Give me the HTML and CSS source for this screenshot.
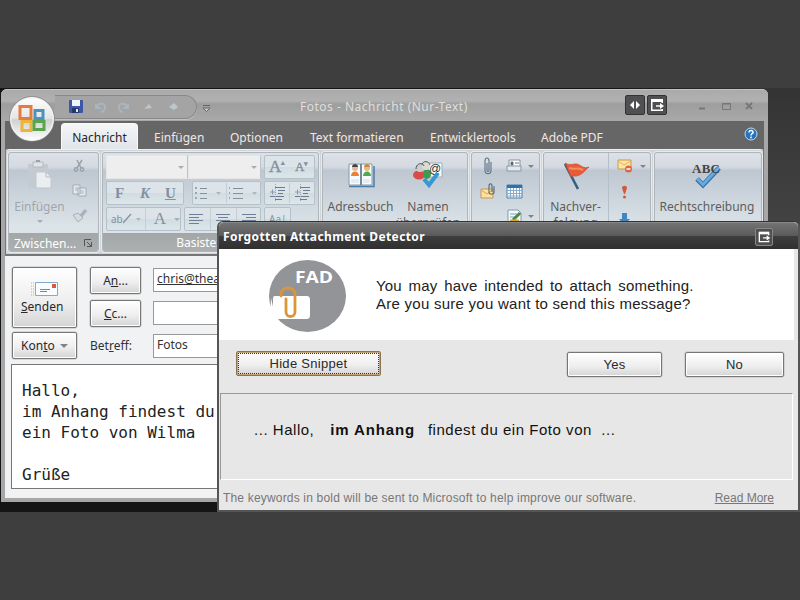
FILE: index.html
```
<!DOCTYPE html>
<html lang="de">
<head>
    <meta charset="utf-8">
    <title>Fotos - Nachricht (Nur-Text)</title>
    <link rel="stylesheet" href="styles.css">
</head>
<body>
<div class="desktop">
    <div class="mail">
        <div class="titlebar">
            <div class="quick">
                <svg width="140" height="22" viewBox="0 0 140 22">
                    <rect x="14" y="4" width="14" height="13" rx="1" fill="#3d56a5"/><rect x="17" y="4" width="8" height="6" fill="#eef3fb"/><path d="M17 12h7v5h-7z" fill="#25366e"/><path d="M21 13h2v3h-2z" fill="#dfe7f2"/>
                    <g fill="none" stroke="#a8b4bf" stroke-width="2"><path d="M41 8v4h5M42 11c2-5 9-4 8 1 0 2-2 4-4 4M73 8v4h-5M72 11c-2-5-9-4-8 1 0 2 2 4 4 4"/></g>
                    <path d="M89 13l5-5 3 4zM114 11l5-4 4 4-4 3z" fill="#bcc6cd"/>
                </svg>
            </div>
            <svg class="customize" width="9" height="9" viewBox="0 0 9 9"><path d="M1 1.500h7M1 4h7L4.500 7.500z" stroke="#666" fill="#ccc"/></svg>
            <div class="caption">Fotos - Nachricht (Nur-Text)</div>
            <div class="tools">
                <span class="tool"><svg width="18" height="18" viewBox="0 0 18 18"><path d="M8 5v8L4 9zM10 5v8l4-4z" fill="#fff"/></svg></span>
                <span class="tool"><svg width="18" height="18" viewBox="0 0 18 18"><path d="M3 3h12v3H3z" fill="#fff"/><path d="M14.250 5v2M3.750 5v9.250h10.500V13" fill="none" stroke="#fff" stroke-width="1.500"/><path d="M8 9.200h4V7l4 3-4 3v-2.200H8z" fill="#fff"/></svg></span>
            </div>
            <svg class="winbtns" width="56" height="12" viewBox="0 0 56 12"><path d="M1 8.500h6" stroke="#777" stroke-width="2"/><path d="M24.500 3.500h8v6h-8zM24 4h9" fill="none" stroke="#777"/><path d="M48 3l6 6M54 3l-6 6" stroke="#777" stroke-width="1.800"/></svg>
        </div>
        <div class="tabs">
            <span class="tab active">Nachricht</span>
            <span class="tab t2">Einfügen</span>
            <span class="tab t3">Optionen</span>
            <span class="tab t4">Text formatieren</span>
            <span class="tab t5">Entwicklertools</span>
            <span class="tab t6">Adobe PDF</span>
            <svg class="help" width="14" height="14" viewBox="0 0 14 14"><circle cx="7" cy="7" r="6" fill="#2874bc" stroke="#b8dcf5"/><path d="M5 5.500c0-3 4.500-2.500 4 0C8.700 7 7 6.500 7 8.500M7 9.500v1.700" fill="none" stroke="#fff" stroke-width="1.500"/></svg>
        </div>
        <div class="ribbon">
            <div class="group clipboard">
                <div class="area">
                    <div class="big">
                        <svg width="30" height="32" viewBox="0 0 30 32"><path d="M3 4h20v24H3z" fill="#c3cad2"/><path d="M8 2h10v5H8z" fill="#e0e4e8" stroke="#b2b9c0"/><path d="M11 1h4" stroke="#9aa3ac" stroke-width="2"/><path d="M11 12h10l5 5v11H11z" fill="#ebeef1" stroke="#c0c7cd"/><path d="M21 12v5h5" fill="none" stroke="#b4bdc5"/></svg>
                        <span>Einfügen</span>
                        <i class="drop"></i>
                    </div>
                    <div class="small-col">
                        <svg width="18" height="18" viewBox="0 0 18 18"><path d="M7 3l4 8M12 3l-5 8" stroke="#98a2ac" stroke-width="1.500"/><circle cx="6" cy="12.500" r="1.700" fill="none" stroke="#98a2ac" stroke-width="1.500"/><circle cx="12" cy="12.500" r="1.700" fill="none" stroke="#98a2ac" stroke-width="1.500"/></svg>
                        <svg width="18" height="18" viewBox="0 0 18 18"><path d="M3 3h7v9H3zM8 6h8v8H8z" fill="#e6eaee" stroke="#a2abb4"/><path d="M5 6h3M5 8h3M10 9h4M10 11h4" stroke="#abb3bb"/></svg>
                        <svg width="18" height="18" viewBox="0 0 18 18"><path d="M16 3l-5 6" stroke="#a9b1ba" stroke-width="3.500"/><path d="M3 8l5-2 5 5-5 4z" fill="#d5dadf" stroke="#a9b1ba"/></svg>
                    </div>
                </div>
                <div class="label clip-label"><span>Zwischen...</span><svg width="9" height="9" viewBox="0 0 9 9"><path d="M.5 7V.5H7M3 3l4 4M7.500 3v4.500H3" fill="none" stroke="#555"/></svg></div>
            </div>
            <div class="group format">
                <div class="area rows">
                    <div class="row">
                        <div class="combo c1"><i class="drop"></i></div><div class="combo c2"><i class="drop"></i></div>
                        <div class="box b51 serif"><b class="fa">A<sup>▴</sup></b><b class="fb">A<sup>▾</sup></b></div>
                    </div>
                    <div class="row">
                        <div class="box b78 serif"><b>F</b><b><em>K</em></b><b><u>U</u></b></div>
                        <div class="box b70 gap8"><svg width="68" height="22" viewBox="0 0 68 22"><path d="M2 6h2M2 11h2M2 16h2M36 6h1M36 11h1M36 16h1" stroke="#9aa6b2" stroke-width="2"/><path d="M7 6.500h7M7 11.500h7M7 16.500h7M40 6.500h10M40 11.500h10M40 16.500h10" stroke="#8290a0"/><path d="M23 10h5l-2.500 3zM59 10h5l-2.500 3z" fill="#b0b8bf"/><path d="M33.500 1v20" stroke="#c5ced5"/></svg></div>
                        <div class="box b51"><svg width="49" height="22" viewBox="0 0 49 22"><path d="M10 5.500h10M13 8.500h7M13 11.500h5M5 14.500h14M10 17.500h7M35 5.500h10M38 8.500h7M38 11.500h5M30 14.500h14M35 17.500h7" stroke="#687b91"/><path d="M5 10h5M7.500 7.500v5M30 10h5M32.500 7.500v5" stroke="#8c9bab"/><path d="M10.500 2v18M35.500 2v18" stroke="#9daab6" stroke-dasharray="1 1"/><path d="M24.500 1v20" stroke="#c5ced5"/></svg></div>
                    </div>
                    <div class="row">
                        <div class="box b74"><span class="ab">ab</span><svg width="24" height="22" viewBox="0 0 24 22"><path d="M0 15l8-9" stroke="#8a98a6" stroke-width="1.500"/><path d="M13 10h5l-2.500 3z" fill="#b0b8bf"/><path d="M22.500 0v22" stroke="#c5ced5"/></svg><span class="serif big-a">A</span><i class="drop"></i></div>
                        <div class="box b78b"><svg width="76" height="22" viewBox="0 0 76 22"><path d="M4 6.500h14M4 9.500h10M4 12.500h14M4 15.500h10M31 6.500h14M33 9.500h10M31 12.500h14M33 15.500h10M57 6.500h14M61 9.500h10M57 12.500h14" stroke="#6e8198"/><path d="M25.500 0v22M51.500 0v22" stroke="#c5ced5"/></svg></div>
                        <div class="box b26"><span class="ab">Aa|</span></div>
                    </div>
                </div>
                <div class="label basic">Basistext</div>
            </div>
            <div class="group names">
                <div class="area pair">
                    <div class="big">
                        <svg width="30" height="32" viewBox="0 0 30 32"><path d="M3 4h12v21H3zM15 4h11v21H15z" fill="#f8fbfd" stroke="#8299ad"/><path d="M3 26.500h25V6" fill="none" stroke="#4b7da8" stroke-width="1.500"/><path d="M15 4v21" stroke="#667f95" stroke-width="1.500"/><path d="M5 16c0-6 8-6 8 0z" fill="#eb8134"/><path d="M17 16c0-6 8-6 8 0z" fill="#4faa50"/><circle cx="9" cy="8" r="3" fill="#e3b99a"/><circle cx="21" cy="8" r="3" fill="#e4bc8a"/><path d="M6 7c0-4 6-4 6 0z" fill="#434343"/><path d="M18 7c0-4 6-4 6 0z" fill="#c58c39"/><path d="M5 20h8M5 22h8M17 20h7M17 22h7" stroke="#d5dee5"/></svg>
                        <span>Adressbuch</span>
                    </div>
                    <div class="big second">
                        <svg width="32" height="32" viewBox="0 0 32 32"><path d="M12 3h18v14H12z" fill="#f8fbfe" stroke="#98aebf"/><ellipse cx="7" cy="15" rx="6" ry="4.500" fill="#d94b48"/><ellipse cx="15" cy="14" rx="4" ry="5" fill="#3b9b4e"/><circle cx="8" cy="8" r="4" fill="#cbcdd0"/><circle cx="14" cy="6" r="4" fill="#dbdad5"/><path d="M4 9c0-6 7-7 8-3M10 5c1-5 7-4 8 0" fill="none" stroke="#555"/><text x="17" y="13" font-family="Liberation Sans" font-size="12" fill="#333">@</text><path d="M12 19l5 6 9-12" fill="none" stroke="#3897d5" stroke-width="4"/></svg>
                        <span>Namen<br>überprüfen</span>
                    </div>
                </div>
                <div class="label"></div>
            </div>
            <div class="group include">
                <div class="area icons">
                    <div class="small-col">
                        <svg width="18" height="20" viewBox="0 0 18 20"><path d="M12 6v8c0 5-6 5-6 0V5c0-4 4-4 4 0v9c0 2-2 2-2 0V7" fill="none" stroke="#5c7185" stroke-width="1.100"/></svg>
                        <svg width="18" height="20" viewBox="0 0 18 20"><path d="M2 8h12v9H2z" fill="#ffe09b" stroke="#c39b54"/><path d="M2 9l6 4 6-4" fill="none" stroke="#d6a75a"/><path d="M15 5v6c0 3-5 3-5 0V5c0-3 3-3 3 0v6" fill="none" stroke="#52697d" stroke-width="1.100"/></svg>
                    </div>
                    <div class="small-col right">
                        <div><svg width="18" height="20" viewBox="0 0 18 20"><path d="M4 4h11v9H4z" fill="#fff" stroke="#8094a7"/><path d="M2 10h14v5H2z" fill="#e1e8ef" stroke="#8797a5"/><path d="M6 6h2v3H6zM10 7h4" fill="#555" stroke="#777"/></svg><i class="drop dark"></i></div>
                        <div><svg width="18" height="20" viewBox="0 0 18 20"><path d="M2 4h15v13H2z" fill="#fff" stroke="#4d7eac"/><path d="M2 5.500h15" stroke="#3270aa" stroke-width="3"/><path d="M5.500 7v10M8.500 7v10M11.500 7v10M14.500 7v10M2 9.500h15M2 12.500h15M2 15h15" stroke="#86abcf"/></svg></div>
                        <div class="down"><svg width="18" height="20" viewBox="0 0 18 20"><path d="M3 4h10l3 3v12H3z" fill="#f6f9fc" stroke="#8299b0"/><path d="M5 8h7M5 11h6" stroke="#7ba1c2"/><path d="M8 14l7-7" stroke="#4d863d" stroke-width="3"/><path d="M5 15h9" stroke="#d8a63f" stroke-width="3"/></svg><i class="drop dark"></i></div>
                    </div>
                </div>
                <div class="label"></div>
            </div>
            <div class="group follow">
                <div class="area">
                    <div class="big">
                        <svg width="32" height="32" viewBox="0 0 32 32"><path d="M5 4l13 25" stroke="#375f80" stroke-width="2.600"/><path d="M5 3c7 4 10-2 16 3 3 2 5 2 8 1-5 4-8 10-16 9l-2 1z" fill="#e75c36" stroke="#b94930" stroke-width=".6"/><path d="M9 8c5 2 8-1 14 2" fill="none" stroke="#f78b62" stroke-width="2"/></svg>
                        <span>Nachver-<br>folgung</span>
                    </div>
                    <div class="small-col flags">
                        <div><svg width="18" height="20" viewBox="0 0 18 20"><path d="M1 4h13v9H1z" fill="#ffe49f" stroke="#c59a4e"/><path d="M1 5l6 4 7-4" fill="none" stroke="#e0b467"/><circle cx="11.500" cy="13" r="3.500" fill="#dd6540"/><path d="M9.500 13h4" stroke="#fff" stroke-width="1.500"/></svg><i class="drop dark"></i></div>
                        <div><svg width="18" height="20" viewBox="0 0 18 20"><path d="M5 6c0-3 5-3 5 0l-2 6H7z" fill="#d75737"/><circle cx="7.500" cy="15" r="1.500" fill="#d75737"/></svg></div>
                        <div class="down"><svg width="18" height="20" viewBox="0 0 18 20"><path d="M5 5h5v6h3l-5.500 6L2 11h3z" fill="#4386bd"/></svg></div>
                    </div>
                </div>
                <div class="label"></div>
            </div>
            <div class="group spell">
                <div class="area">
                    <div class="big">
                        <svg width="36" height="32" viewBox="0 0 36 32"><path d="M8 20l6 6L30 9" fill="none" stroke="#3472ad" stroke-width="5"/><path d="M8 19.500l6 6L30 8.500" fill="none" stroke="#69aada" stroke-width="3"/><text x="3" y="14" font-family="Liberation Serif" font-weight="bold" font-size="13" textLength="28" fill="#444">ABC</text></svg>
                        <span>Rechtschreibung</span>
                    </div>
                </div>
                <div class="label"></div>
            </div>
        </div>
        <div class="compose">
            <div class="header">
                <div class="left-buttons">
                    <button class="btn send"><svg width="28" height="16" viewBox="0 0 28 16"><path d="M5.500 1.500h22v13h-22z" fill="#fafdff" stroke="#87a9c9"/><path d="M22 3h4v4h-4z" fill="#d65b3b"/><path d="M10 8.500h10M10 10.500h7" stroke="#5c8dbb"/><path d="M1 2h3M1 5h3M1 8h3M1 11h3M1 14h3" stroke="#9bb5cd" stroke-dasharray="1 1"/></svg><span><u>S</u>enden</span></button>
                    <button class="btn account">Kon<u>t</u>o <i class="drop dark"></i></button>
                </div>
                <div class="fields">
                    <button class="btn to">A<u>n</u>...</button><div class="field"><u>chris@thea</u></div>
                    <button class="btn to"><u>C</u>c...</button><div class="field"></div>
                    <span class="subject">Bet<u>r</u>eff:</span><div class="field">Fotos</div>
                </div>
            </div>
            <div class="message">Hallo,
im Anhang findest du
ein Foto von Wilma

Grüße</div>
        </div>
        <svg class="orb" width="46" height="46" viewBox="0 0 46 46">
            <defs><linearGradient id="orb" x2="0" y2="1"><stop stop-color="#fff"/><stop offset=".48" stop-color="#e4e5e6"/><stop offset=".52" stop-color="#cfd0d2"/><stop offset="1" stop-color="#fff"/></linearGradient></defs>
            <circle cx="23" cy="23" r="21.500" fill="url(#orb)" stroke="#f5f5f5" stroke-width="1.500"/><circle cx="23" cy="23" r="22.500" fill="none" stroke="#777" stroke-width=".6"/>
            <g fill="none" stroke-width="3"><path d="M11 10.500h11v12H11z" stroke="#e47c3c"/><path d="M26 14.500h8v8h-8z" stroke="#4d91bf"/><path d="M13 25.500h9v9h-9z" stroke="#edb536"/><path d="M25 25.500h10v8H25z" stroke="#5aa54c"/></g>
        </svg>
    </div>

    <div class="dialog">
        <div class="dialog-title"><span>Forgotten Attachment Detector</span><span class="tool"><svg width="16" height="16" viewBox="0 0 18 18"><path d="M3 3h12v3H3z" fill="#fff"/><path d="M14.250 5v2M3.750 5v9.250h10.500V13" fill="none" stroke="#fff" stroke-width="1.500"/><path d="M8 9.200h4V7l4 3-4 3v-2.200H8z" fill="#fff"/></svg></span></div>
        <div class="question">
            <svg width="80" height="74" viewBox="0 0 80 74"><ellipse cx="40.500" cy="37" rx="38.500" ry="36" fill="#939498"/><path d="M6 40c0-3 1-3 3-3h30c3 0 4 1 4 4v15c0 3-1 4-4 4H11c-3 0-3-2-5-6z" fill="#fff"/><path d="M4 39l5 22H3z" fill="#fff"/><path d="M14 37v-2c0-8 14-8 14 0v18c0 6-9 6-9 0V40" fill="none" stroke="#da9638" stroke-width="2.800" stroke-linecap="round"/><text x="28" y="24" font-family="Open Sans" font-weight="bold" font-size="16" textLength="38" lengthAdjust="spacingAndGlyphs" fill="#fff">FAD</text></svg>
            <p><span class="line1">You may have intended to attach something.</span><br><span class="line2">Are you sure you want to send this message?</span></p>
        </div>
        <div class="actions">
            <button class="btn hide">Hide Snippet</button>
            <button class="btn yes">Yes</button>
            <button class="btn no">No</button>
        </div>
        <div class="snippet"><span>... Hallo,</span><b>im Anhang</b><span>findest du ein Foto von&nbsp; ...</span></div>
        <div class="footer"><span>The keywords in bold will be sent to Microsoft to help improve our software.</span><u>Read More</u></div>
    </div>
</div>
</body>
</html>
```
FILE: styles.css
```
* {
    box-sizing: border-box;
}
body {
    margin: 0;
    width: 800px;
    height: 600px;
    overflow: hidden;
    padding-top: 88px;
    background: #3e3e3e;
    font-family: "Noto Sans", sans-serif;
    font-size: 12px;
    color: #333;
}
svg {
    display: block;
    flex: none;
}
.desktop {
    position: relative;
    height: 424px;
    background: linear-gradient(90deg, #151515 0 76%, transparent 96%), linear-gradient(#343434, #444 35%, #303030);
}
.mail {
    position: absolute;
    left: 1px;
    top: 1px;
    width: 767px;
    height: 413px;
    display: flex;
    flex-direction: column;
    border: solid #a7a7a7;
    border-width: 0 4px 4px;
    border-radius: 6px 6px 0 0;
    background: #a7a7a7;
    box-shadow: inset 0 0 0 1px #777;
}
.titlebar {
    height: 32px;
    flex: none;
    display: flex;
    align-items: center;
    margin: 0 -4px;
    padding-left: 54px;
    border-top: 1px solid #c2c2c2;
    border-radius: 6px 6px 0 0;
    background: linear-gradient(#aaa, #b1b1b1 35%, #9e9e9e 45%, #a9a9a9);
}
.quick {
    width: 142px;
    height: 24px;
    margin-top: 3px;
    border: 1px solid #888;
    border-left: 0;
    border-radius: 0 12px 12px 0;
    box-shadow: 0 1px #c0c0c0;
    background: #a4a4a4;
}
.customize {
    margin: 5px 89px 0 5px;
}
.caption {
    width: 325px;
    color: #dedede;
    font-size: 12px;
    letter-spacing: .5px;
    padding-top: 2px;
}
.tools {
    display: flex;
    gap: 2px;
    margin-bottom: 2px;
}
.tool {
    display: flex;
    align-items: center;
    justify-content: center;
    width: 20px;
    height: 20px;
    border: 1px solid #333;
    border-radius: 2px;
    background: #505053;
}
.winbtns {
    margin: 1px 0 0 31px;
}
.tabs {
    height: 28px;
    flex: none;
    display: flex;
    align-items: center;
    padding: 2px 0 0 56px;
    background: #666;
    color: #f0e6e8;
}
.tab {
    width: 83px;
    padding-top: 2px;
    white-space: nowrap;
}
.tab.active {
    width: 77px;
    height: 27px;
    margin-right: 16px;
    padding: 5px 0 0;
    text-align: center;
    border: 1px solid #fafafa;
    border-bottom: 0;
    border-radius: 4px 4px 0 0;
    background: linear-gradient(#f4f6f7, #dfe4e9);
    color: #252525;
}
.tab.t2 { width: 76px; }
.tab.t3 { width: 80px; }
.tab.t4 { width: 120px; }
.tab.t5 { width: 111px; }
.tab.t6 { width: 203px; }
.help {
    margin-top: -4px;
}
.ribbon {
    height: 107px;
    flex: none;
    display: flex;
    gap: 3px;
    margin: 0 1px;
    padding: 2px;
    border-radius: 4px 4px 0 0;
    border-top: 1px solid #eef1f3;
    background: #cfd4d9;
    border-bottom: 2px solid #777;
    color: #5d5d5d;
}
.group {
    flex: none;
    overflow: hidden;
    border: 1px solid #aeb5bb;
    border-radius: 3px;
    box-shadow: 0 0 0 1px #e7ebee;
    background: linear-gradient(#dce1e7, #d5dae2 14%, #bec7d1 18%, #dce4e9 75%);
}
.clipboard { width: 91px; }
.format { width: 217px; }
.names { width: 146px; }
.include { width: 69px; }
.follow { width: 108px; }
.spell { width: 108px; }
.area {
    height: 80px;
    display: flex;
}
.label {
    height: 20px;
    padding-top: 1px;
    text-align: center;
    color: #fff;
    background: linear-gradient(#a3a7a8, #adb1b2);
}
.basic {
    padding-right: 18px;
}
.clip-label {
    display: flex;
    align-items: center;
    justify-content: space-between;
    padding: 0 5px;
}
.big {
    display: flex;
    flex-direction: column;
    align-items: center;
    text-align: center;
    padding-top: 7px;
    line-height: 16px;
    white-space: nowrap;
}
.big svg {
    margin-bottom: 7px;
}
.clipboard .big {
    width: 61px;
    color: #a1a6ab;
}
.clipboard .big .drop {
    margin: 5px 0 0;
}
.clipboard .small-col {
    gap: 7px;
}
.drop {
    display: inline-block;
    width: 0;
    height: 0;
    border: 3px solid transparent;
    border-top-color: #a6aeb5;
    border-bottom: 0;
}
.drop.dark {
    border-top-color: #7c858d;
}
.small-col {
    display: flex;
    flex-direction: column;
    padding-top: 4px;
}
.rows {
    flex-direction: column;
    gap: 2px;
    padding: 2px 3px;
}
.row {
    display: flex;
    height: 24px;
    gap: 3px;
}
.box {
    display: flex;
    align-items: center;
    border: 1px solid #b5c1c8;
    border-radius: 2px;
    background: linear-gradient(#dce4e9 50%, #d1dce2 50%, #dce6ea);
    color: #8490a0;
    overflow: hidden;
}
.combo {
    display: flex;
    align-items: center;
    justify-content: flex-end;
    padding-right: 3px;
    background: #eee;
    border: 1px solid #e6e6e6;
    border-right-color: #bec5ca;
}
.c1 { width: 82px; margin-right: -3px; }
.c2 { width: 73px; }
.b51 { width: 51px; }
.b78 { width: 78px; }
.b70 { width: 69px; }
.gap8 { margin-left: 5px; }
.b74 { width: 75px; }
.b78b { width: 77px; }
.b26 { width: 27px; }
.serif {
    font-family: "Liberation Serif", serif;
    font-size: 15px;
}
.serif > b {
    flex: 1;
    text-align: center;
}
.serif .fa, .serif .fb {
    font-weight: normal;
    font-size: 17px;
    -webkit-text-stroke: .4px;
}
.serif .fb { font-size: 13px; }
.serif sup { font-size: 7px; }
.ab {
    padding-left: 4px;
    font-size: 10px;
}
.big-a {
    padding: 0 8px 0 7px;
    font-size: 17px;
}
.names .big {
    width: 75px;
}
.names .second {
    width: 60px;
}
.include .area {
    padding-left: 7px;
}
.icons .small-col {
    gap: 5px;
    padding-top: 3px;
}
.icons .right {
    margin-left: 8px;
}
.small-col > div {
    display: flex;
    align-items: center;
    gap: 5px;
}
.follow .big {
    width: 63px;
}
.follow .flags {
    gap: 6px;
    margin-left: 1px;
    padding: 3px 0 0 8px;
    border-left: 1px solid #b4bfc8;
}
.spell .big {
    width: 104px;
    padding-top: 6px;
}
.spell .big svg {
    margin-bottom: 8px;
}
.compose {
    flex: 1;
    min-height: 0;
    display: flex;
    flex-direction: column;
    padding: 11px 0 9px 6px;
    background: #f1f2f3;
}
.header {
    display: flex;
    gap: 13px;
}
.left-buttons {
    display: flex;
    flex-direction: column;
    gap: 4px;
    padding-left: 1px;
}
.btn {
    font: inherit;
    color: #292929;
    padding: 0;
    border: 1px solid #777;
    border-radius: 2px;
    box-shadow: inset 0 0 0 1px #fff, 0 0 0 .5px #bbb;
    background: linear-gradient(#fff, #ededed 60%, #d4d4d4);
}
.send {
    width: 65px;
    height: 61px;
    padding: 1px 6px 0 8px;
}
.send svg {
    margin: 0 0 1px 9px;
}
.send span {
    display: block;
    text-align: left;
}
.account {
    width: 65px;
    height: 27px;
}
.account .drop {
    border-width: 4px;
    border-bottom: 0;
    margin: 0 0 2px 2px;
}
.fields {
    flex: 1;
    display: grid;
    grid-template-columns: 51px 1fr;
    grid-template-rows: 27px 27px 27px;
    gap: 6px 12px;
}
.fields .field {
    height: 24px;
    margin-top: 1px;
    padding: 1px 3px;
    border: 1px solid #999;
    background: #fff;
}
.subject {
    padding-top: 4px;
}
.message {
    flex: 1;
    min-height: 0;
    margin-top: 4px;
    padding: 15px 10px 0;
    border: 1px solid #777;
    background: #fff;
    white-space: pre;
    color: #222;
    font: 16px/21px "DejaVu Sans Mono", monospace;
}
.orb {
    position: absolute;
    left: 4px;
    top: 7px;
}
.dialog {
    position: absolute;
    left: 217px;
    top: 133px;
    width: 583px;
    height: 291px;
    display: flex;
    flex-direction: column;
    border: 2px solid #555;
    border-top: 1px solid #333;
    border-radius: 6px 6px 0 0;
    background: #e7e7e7;
    font-family: "Liberation Sans", sans-serif;
}
.dialog-title {
    height: 27px;
    flex: none;
    display: flex;
    align-items: center;
    justify-content: space-between;
    padding: 1px 25px 0 4px;
    border-top: 1px solid #888;
    border-radius: 5px 5px 0 0;
    background: linear-gradient(#737373, #5b5b5b 48%, #3d3d3d 52%, #303030);
    color: #fff;
    font: bold 12px "Noto Sans", sans-serif;
    letter-spacing: .4px;
}
.dialog-title .tool {
    width: 18px;
    height: 18px;
    border-color: #888;
}
.question {
    height: 91px;
    flex: none;
    display: flex;
    align-items: center;
    margin-right: 4px;
    padding: 2px 0 0 48px;
    background: #fff;
    color: #222;
}
.question p {
    margin: 0 0 2px 29px;
    font-size: 15px;
    line-height: 18px;
    white-space: nowrap;
}
.line1 {
    letter-spacing: .2px;
    word-spacing: 2.3px;
}
.line2 {
    letter-spacing: .26px;
}
.actions {
    height: 53px;
    flex: none;
    display: flex;
    padding: 11px 0 0 17px;
}
.actions .btn {
    height: 25px;
    font-size: 13px;
    letter-spacing: .3px;
    margin-top: 1px;
}
.actions .hide {
    width: 145px;
    border-color: #8e7350;
    box-shadow: inset 0 0 0 1px #c3a579;
    outline: 1px dotted #333;
    outline-offset: -3px;
    margin-top: 0;
}
.yes {
    width: 95px;
    margin-left: 186px;
}
.no {
    width: 99px;
    margin-left: 23px;
}
.snippet {
    height: 87px;
    flex: none;
    margin: 0 5px 0 1px;
    padding: 27px 0 0 33px;
    border: 1px solid #999;
    border-right-color: #fff;
    border-bottom-color: #fff;
    color: #111;
    font-size: 15px;
    letter-spacing: .53px;
    white-space: nowrap;
}
.snippet b {
    margin: 0 13px 0 16px;
    letter-spacing: .85px;
}
.footer {
    display: flex;
    justify-content: space-between;
    padding: 11px 24px 0 4px;
    color: #777;
    font-size: 12px;
    white-space: nowrap;
}
.footer span {
    letter-spacing: .18px;
}
```
